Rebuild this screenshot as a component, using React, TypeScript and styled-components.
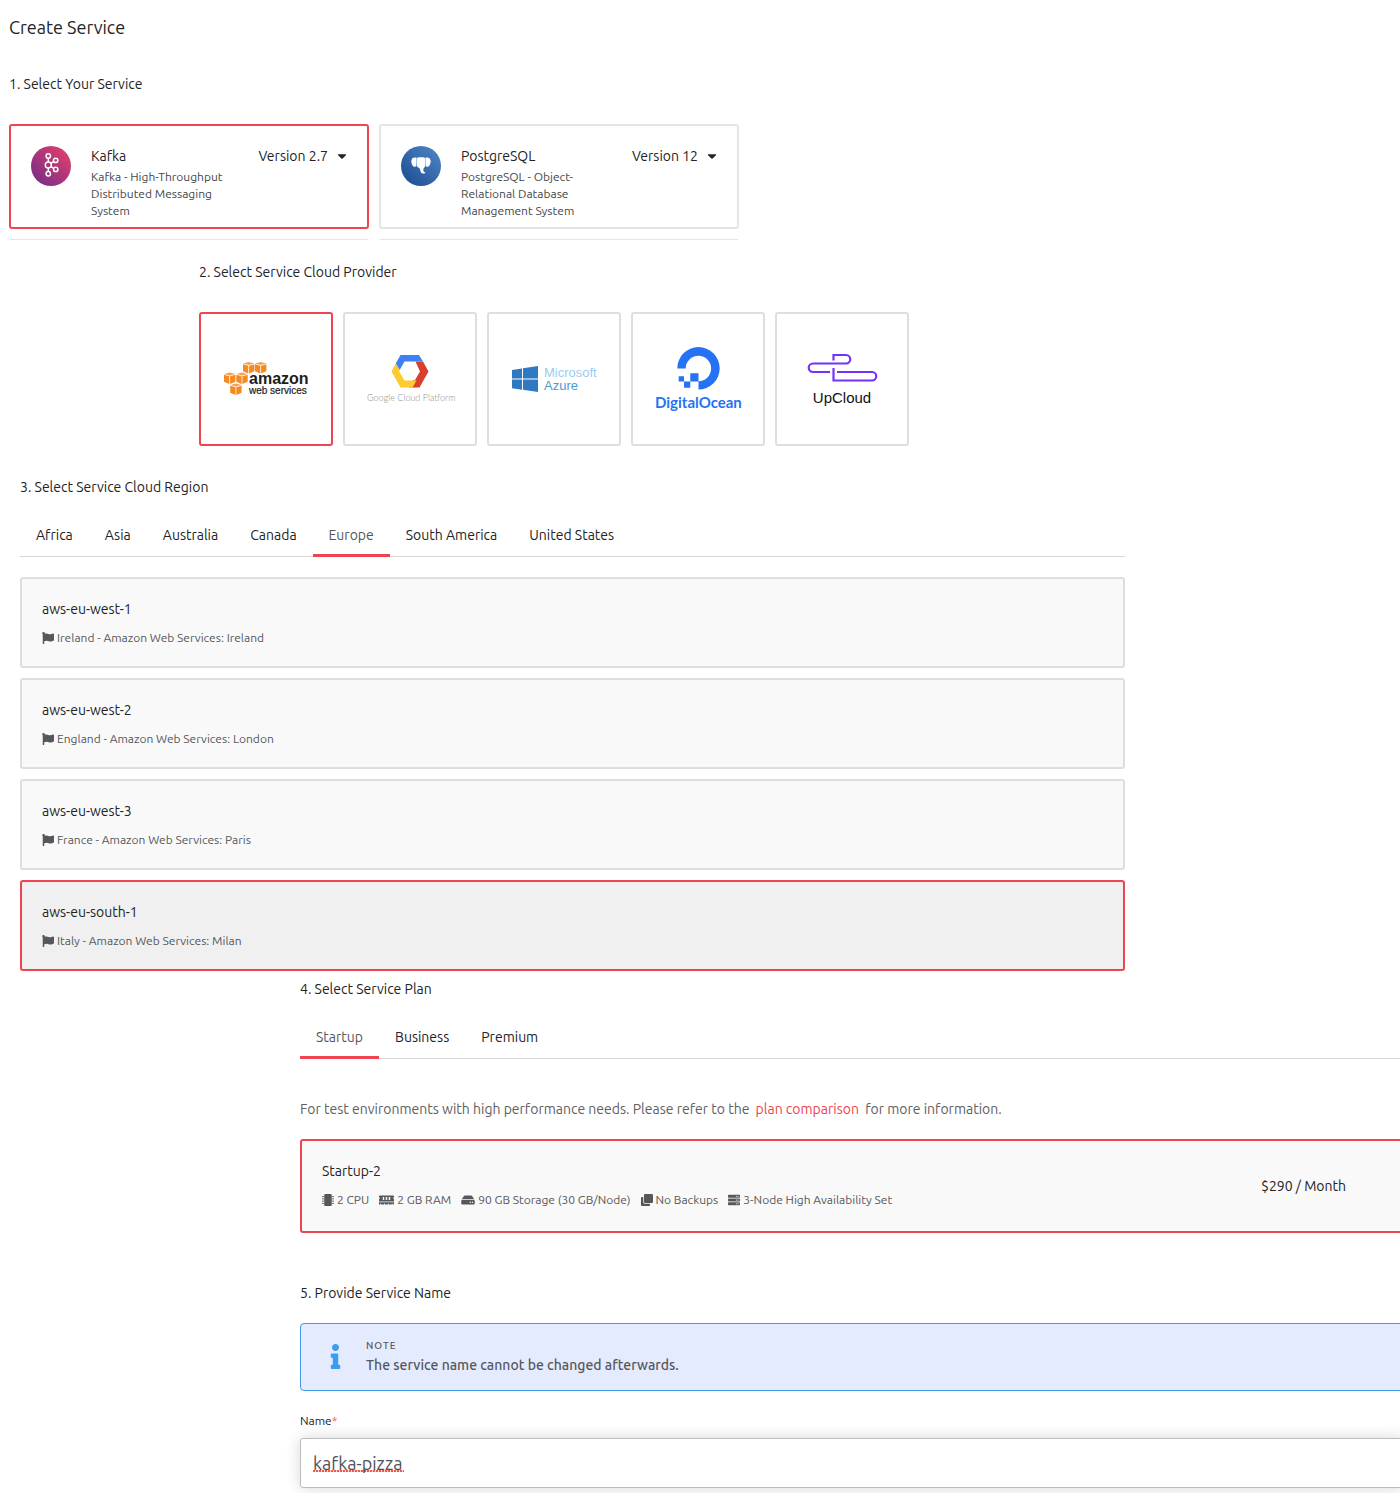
import React, { useState } from "react";
import styled, { createGlobalStyle, css } from "styled-components";
import { FaCaretDown, FaClone, FaFlag, FaHdd, FaInfo, FaMemory, FaMicrochip, FaServer } from "react-icons/fa";

const red = "#ee4550";
const ink = "#222325";
const sub = "#55575a";
const line = "#dedede";
const sans = `Ubuntu, "Noto Sans", "Open Sans", sans-serif`;

const GlobalStyle = createGlobalStyle`
  *, *::before, *::after { box-sizing: border-box; }
  body { margin: 0; background: #fff; color: ${ink}; font: 14px/20px ${sans}; }
  h1, h2, h3, p, ul { margin: 0; padding: 0; font-weight: 400; }
  button, input, select { font: inherit; color: inherit; }
`;

const Page = styled.main`
  display: flex;
  flex-direction: column;
  padding-top: 15px;
  overflow-x: clip;
`;

const Title = styled.h1`
  margin-left: 9px;
  font-size: 18px;
  line-height: 24px;
`;

const Section = styled.section<{ $left: number; $top: number; $right?: number }>`
  display: flex;
  flex-direction: column;
  margin: ${(p) => `${p.$top}px ${p.$right ?? 0}px 0 ${p.$left}px`};
`;

const Heading = styled.h2`
  font-size: 14px;
  line-height: 20px;
`;

const ServiceRow = styled.div`
  display: flex;
  gap: 10px;
  margin-top: 30px;
`;

const ServiceColumn = styled.div`
  display: flex;
  flex-direction: column;
  flex: 0 1 360px;
`;

const ServiceCard = styled.article<{ $selected?: boolean }>`
  display: flex;
  align-items: flex-start;
  padding: 20px 20px 8px;
  border: 2px solid ${(p) => (p.$selected ? red : "#e5e5e5")};
  border-radius: 3px;
`;

const Divider = styled.hr`
  align-self: stretch;
  margin: 10px 1px 0;
  border: 0;
  border-top: 1px solid #e5e5e5;
`;

const ServiceText = styled.div`
  width: 140px;
  margin-left: 20px;
`;

const ServiceName = styled.h3`
  font-size: 14px;
  line-height: 20px;
`;

const ServiceInfo = styled.p`
  margin-top: 2px;
  color: #444648;
  font-size: 12px;
  line-height: 17px;
`;

const Version = styled.label`
  position: relative;
  display: flex;
  align-items: center;
  margin-left: auto;

  select {
    height: 20px;
    padding: 0 19px 0 0;
    border: 0;
    background: transparent;
    appearance: none;
    line-height: 20px;
    text-align: right;
  }

  svg {
    position: absolute;
    right: -2px;
    pointer-events: none;
  }
`;

const Tiles = styled.div`
  display: flex;
  flex-wrap: wrap;
  gap: 10px;
  margin-top: 30px;
`;

const Tile = styled.button<{ $selected?: boolean }>`
  display: grid;
  place-items: center;
  width: 134px;
  height: 134px;
  padding: 0;
  border: 2px solid ${(p) => (p.$selected ? red : line)};
  border-radius: 3px;
  background: #fff;

  svg {
    overflow: visible;
  }
`;

const TabList = styled.div`
  display: flex;
  margin-top: 16px;
  border-bottom: 1px solid #d6d6d6;
`;

const Tab = styled.button<{ $active: boolean }>`
  height: 44px;
  margin-bottom: -1px;
  padding: 3px 16px 0;
  border: 0;
  border-bottom: 3px solid ${(p) => (p.$active ? red : "transparent")};
  background: transparent;
  color: ${(p) => (p.$active ? sub : ink)};
`;

const Regions = styled.div`
  display: flex;
  flex-direction: column;
  gap: 10px;
  margin-top: 20px;
`;

const panel = css<{ $selected?: boolean }>`
  border: 2px solid ${(p) => (p.$selected ? red : line)};
  border-radius: 3px;
  text-align: left;
`;

const RegionCard = styled.button<{ $selected?: boolean }>`
  ${panel}
  display: flex;
  flex-direction: column;
  padding: 20px 20px 18px;
  background: ${(p) => (p.$selected ? "#f0f0f0" : "#f9f9f9")};
`;

const CardName = styled.span`
  line-height: 20px;
`;

const Details = styled.span`
  display: flex;
  flex-wrap: wrap;
  gap: 10px;
  margin-top: 9px;
  color: ${sub};
  font-size: 12px;
  line-height: 20px;
`;

const Detail = styled.span<{ $iconWidth?: number }>`
  display: inline-flex;
  align-items: center;
  gap: 3px;

  svg {
    width: ${(p) => p.$iconWidth ?? 12}px;
    height: 12px;
  }
`;

const Lead = styled.p`
  margin-top: 40px;
  color: #5e6062;

  a {
    margin: 0 3px;
    color: ${red};
    text-decoration: none;
  }
`;

const PlanCard = styled.button<{ $selected?: boolean }>`
  ${panel}
  display: flex;
  align-items: center;
  justify-content: space-between;
  margin-top: 20px;
  padding: 20px 57px 21px 20px;
  background: #f9f9f9;
`;

const PlanBody = styled.span`
  display: flex;
  flex-direction: column;
`;

const Note = styled.aside`
  display: flex;
  align-items: center;
  gap: 18px;
  margin-top: 20px;
  padding: 13px 22px 15px;
  border: 1px solid #4299e1;
  border-radius: 4px;
  background: #e5ebfe;
  color: #55585c;

  > svg {
    color: #399df0;
  }
`;

const NoteLabel = styled.p`
  font-size: 10px;
  font-weight: 500;
  letter-spacing: 1px;
  line-height: 18px;
`;

const NoteText = styled.p`
  font-weight: 500;
  line-height: 20px;
`;

const FieldLabel = styled.label`
  margin-top: 20px;
  font-size: 12px;
  line-height: 20px;

  span {
    color: #e8503a;
  }
`;

const NameInput = styled.input`
  height: 50px;
  margin: 7px 0 5px;
  padding: 0 12px;
  border: 1px solid #bcbcbc;
  border-radius: 3px;
  background:
    repeating-linear-gradient(90deg, #ee5a4a 0 2px, #fbd5d0 2px 3px) 12px 31px / 91px 2px no-repeat,
    #fff;
  box-shadow: 0 0 15px rgba(0, 0, 0, 0.16);
  color: #4e5155;
  font-size: 18px;
  outline: 0;
`;

const Disc = styled.span<{ $from: string; $to: string }>`
  display: grid;
  flex: none;
  place-items: center;
  width: 40px;
  height: 40px;
  border-radius: 50%;
  background: linear-gradient(45deg, ${(p) => p.$from}, ${(p) => p.$to});
  color: #fff;
`;

const KafkaMark = () => (
  <svg width="40" height="40" viewBox="0 0 40 40" fill="none" stroke="#fff" strokeWidth="1.5" aria-hidden="true">
    <circle cx="17.3" cy="10" r="2.2" />
    <circle cx="17.3" cy="18.9" r="3" />
    <circle cx="17.3" cy="27.7" r="2.2" />
    <circle cx="24.7" cy="14.4" r="2.2" />
    <circle cx="24.7" cy="23.4" r="2.2" />
    <path d="M17.3 12.2v3.7M17.3 21.9v3.6M19.9 17.3l2.9-1.8M19.9 20.5l2.9 1.8" />
  </svg>
);

const Elephant = () => (
  <svg width="20" height="18" viewBox="0 0 20 18" fill="#fff" aria-hidden="true">
    <path d="M5.8.9C3.8-.2.5.5.3 4c-.1 2.3.9 4.5 2.2 5.5 1 .7 2.4.3 2.9-.4C4.8 6.5 4.7 3 5.8.9z" />
    <path d="M14.2.9c2-1.1 5.3-.4 5.500 3.100.1 2.300-.9 4.500-2.200 5.500-1 .7-2.400.3-2.900-.4.600-2.600.7-6.100-.4-8.200z" />
    <path d="M6.2.7c1.9-.6 5.700-.6 7.600 0 1.100 2 1 5.600.4 8.300-.4 1.500-1.500 1.800-1.800 3-.2 1 0 1.900.4 2.700.5.700 1.300.4 1.600.6.100.6-.8 1.300-1.900 1.300-2 0-2.900-1.300-3.200-3.200C9 11.800 8.500 11.200 7.400 10.500 6.400 9.900 6 9.500 5.800 8.700 5.300 6.200 5.100 2.700 6.200.7z" />
  </svg>
);

const Cube = ({ x, y }: { x: number; y: number }) => (
  <g transform={`translate(${x} ${y})`} fill="#f58a22">
    <path d="M5.7 0 11.4 1.5 5.7 3.1 0 1.5z" fill="#f9a04c" />
    <path d="M0 2.2 5.3 3.7V11.4L0 9.2z" />
    <path d="M11.4 2.2 6.1 3.7V11.4l5.3-2.2z" />
  </g>
);

const AwsLogo = () => (
  <svg width="86" height="34" viewBox="-1 0 86 34" role="img" aria-label="Amazon Web Services">
    <Cube x={19} y={0} />
    <Cube x={31} y={0} />
    <Cube x={0} y={10.5} />
    <Cube x={12.3} y={10.5} />
    <Cube x={6.2} y={21.5} />
    <g fill="#1c1c1c" fontFamily="Liberation Sans, Arial, sans-serif">
      <text x="25" y="22" fontSize="16" fontWeight="700">amazon</text>
      <text x="25" y="32" fontSize="10" stroke="#1c1c1c" strokeWidth=".2">web services</text>
    </g>
  </svg>
);

const GoogleLogo = () => (
  <svg width="88" height="50" viewBox="0 0 88 50" role="img" aria-label="Google Cloud Platform">
    <path d="M49.5 7.5H57l5.5 10-9 16H43l4-7 2-.5 5-8.5z" fill="#d8402d" />
    <path d="M34.5 1H53l4 6.5H38.5l-4.8 8.500-4-6.500z" fill="#4080f5" />
    <path d="M29.7 9.5 33.7 16l-.5 1.500 5.300 9h12l-4 7H34.500L25.500 17.500z" fill="#fccb30" />
    <text x="1" y="47" fontSize="9" fill="#8e8e8e" fontFamily="Lato, sans-serif" fontWeight="300">Google Cloud Platform</text>
  </svg>
);

const AzureLogo = () => (
  <svg width="88" height="28" viewBox="-1 0 88 28" role="img" aria-label="Microsoft Azure">
    <path d="M1 5 11 3.5V13.5H1zM12 3.3 27 1v12.5H12zM1 14.5h10v10.2L1 23.2zM12 14.5h15V27l-15-2.2z" fill="#2f79c1" />
    <g fontFamily="Liberation Sans, Arial, sans-serif" fontSize="13">
      <text x="33" y="12" fill="#9accf0">Microsoft</text>
      <text x="33" y="25" fill="#4a9ad4">Azure</text>
    </g>
  </svg>
);

const DigitalOceanLogo = () => (
  <svg width="90" height="68" viewBox="0 0 90 68" role="img" aria-label="DigitalOcean">
    <path d="M45.5 44.5v-8.3A12.7 12.7 0 1 0 32.7 23.4H24.3A21.2 21.2 0 1 1 45.5 44.5z" fill="#2572f5" />
    <path d="M37.3 28.2h8.2v8.2h-8.2zM31 36.4h6.3v6.3H31zM25.7 31.2H31v5.2h-5.3z" fill="#2572f5" />
    <text x="2" y="63" fontSize="15" fontWeight="700" fill="#2572f5" fontFamily="Lato, sans-serif">DigitalOcean</text>
  </svg>
);

const UpCloudLogo = () => (
  <svg width="72" height="56" viewBox="0 0 72 56" role="img" aria-label="UpCloud">
    <path d="M27.5 9.5V4H40a4 4 0 0 1 0 8.5H7a4.2 4.2 0 0 0 0 8.5h17M27.5 17v12.5H66a4.2 4.2 0 0 0 0-8.5H31" fill="none" stroke="#7332fa" strokeWidth="2.2" />
    <text x="36" y="52" fontSize="15" textAnchor="middle" fill="#111" fontFamily="Liberation Sans, Arial, sans-serif">UpCloud</text>
  </svg>
);

const VersionPicker = ({ id, value }: { id: string; value: string }) => (
  <Version htmlFor={id}>
    <select id={id} defaultValue={value} aria-label="Version">
      <option>{value}</option>
    </select>
    <FaCaretDown size={14} />
  </Version>
);

const providers = [AwsLogo, GoogleLogo, AzureLogo, DigitalOceanLogo, UpCloudLogo];

const regions = [
  ["aws-eu-west-1", "Ireland - Amazon Web Services: Ireland"],
  ["aws-eu-west-2", "England - Amazon Web Services: London"],
  ["aws-eu-west-3", "France - Amazon Web Services: Paris"],
  ["aws-eu-south-1", "Italy - Amazon Web Services: Milan"],
];

const specs = [
  { icon: FaMicrochip, width: 12, text: "2 CPU" },
  { icon: FaMemory, width: 15, text: "2 GB RAM" },
  { icon: FaHdd, width: 14, text: "90 GB Storage (30 GB/Node)" },
  { icon: FaClone, width: 12, text: "No Backups" },
  { icon: FaServer, width: 12, text: "3-Node High Availability Set" },
];

const Tabs = ({ names, initial }: { names: string[]; initial: string }) => {
  const [active, setActive] = useState(initial);
  return (
    <TabList role="tablist">
      {names.map((name) => (
        <Tab key={name} type="button" role="tab" aria-selected={name === active} $active={name === active} onClick={() => setActive(name)}>
          {name}
        </Tab>
      ))}
    </TabList>
  );
};

export default function App() {
  const [provider, setProvider] = useState(0);
  const [region, setRegion] = useState("aws-eu-south-1");

  return (
    <Page>
      <GlobalStyle />
      <Title>Create Service</Title>

      <Section $left={9} $right={9} $top={35}>
        <Heading>1. Select Your Service</Heading>
        <ServiceRow>
          <ServiceColumn>
            <ServiceCard $selected>
              <Disc $from="#6a2c8c" $to="#ee4068"><KafkaMark /></Disc>
              <ServiceText>
                <ServiceName>Kafka</ServiceName>
                <ServiceInfo>Kafka - High-Throughput Distributed Messaging System</ServiceInfo>
              </ServiceText>
              <VersionPicker id="kafka-version" value="Version 2.7" />
            </ServiceCard>
            <Divider />
          </ServiceColumn>
          <ServiceColumn>
            <ServiceCard>
              <Disc $from="#1a4a8e" $to="#5088c8"><Elephant /></Disc>
              <ServiceText>
                <ServiceName>PostgreSQL</ServiceName>
                <ServiceInfo>PostgreSQL - Object-Relational Database Management System</ServiceInfo>
              </ServiceText>
              <VersionPicker id="postgres-version" value="Version 12" />
            </ServiceCard>
            <Divider />
          </ServiceColumn>
        </ServiceRow>
      </Section>

      <Section $left={199} $top={22}>
        <Heading>2. Select Service Cloud Provider</Heading>
        <Tiles>
          {providers.map((Logo, i) => (
            <Tile key={i} type="button" $selected={i === provider} onClick={() => setProvider(i)}>
              <Logo />
            </Tile>
          ))}
        </Tiles>
      </Section>

      <Section $left={20} $right={275} $top={31}>
        <Heading>3. Select Service Cloud Region</Heading>
        <Tabs names={["Africa", "Asia", "Australia", "Canada", "Europe", "South America", "United States"]} initial="Europe" />
        <Regions>
          {regions.map(([name, place]) => (
            <RegionCard key={name} type="button" $selected={name === region} onClick={() => setRegion(name)}>
              <CardName>{name}</CardName>
              <Details>
                <Detail><FaFlag />{place}</Detail>
              </Details>
            </RegionCard>
          ))}
        </Regions>
      </Section>

      <Section $left={300} $right={-5} $top={8}>
        <Heading>4. Select Service Plan</Heading>
        <Tabs names={["Startup", "Business", "Premium"]} initial="Startup" />
        <Lead>
          For test environments with high performance needs. Please refer to the <a href="#plans">plan comparison</a> for more information.
        </Lead>
        <PlanCard type="button" $selected>
          <PlanBody>
            <CardName>Startup-2</CardName>
            <Details>
              {specs.map(({ icon: Icon, width, text }) => (
                <Detail key={text} $iconWidth={width}><Icon />{text}</Detail>
              ))}
            </Details>
          </PlanBody>
          <CardName>$290 / Month</CardName>
        </PlanCard>
      </Section>

      <Section $left={300} $right={-5} $top={50}>
        <Heading>5. Provide Service Name</Heading>
        <Note>
          <FaInfo size={25} />
          <div>
            <NoteLabel>NOTE</NoteLabel>
            <NoteText>The service name cannot be changed afterwards.</NoteText>
          </div>
        </Note>
        <FieldLabel htmlFor="service-name">Name<span>*</span></FieldLabel>
        <NameInput id="service-name" defaultValue="kafka-pizza" spellCheck={false} />
      </Section>
    </Page>
  );
}
